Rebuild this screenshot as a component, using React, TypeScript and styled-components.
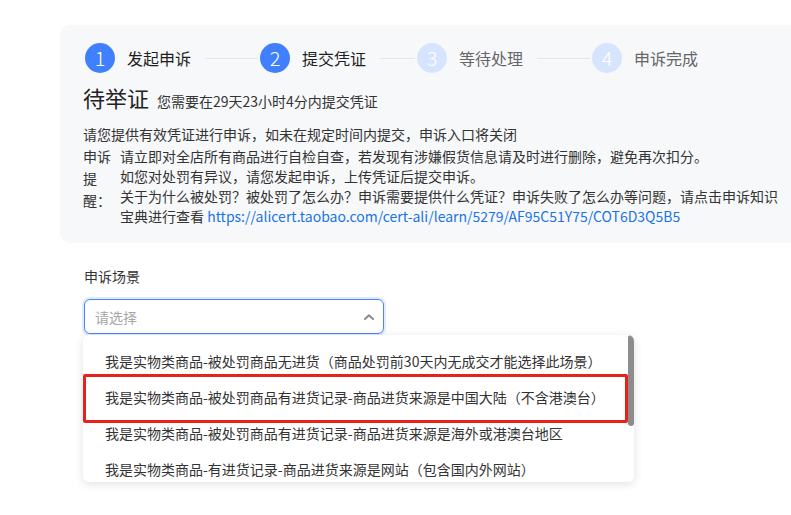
import React from 'react'
import styled, { createGlobalStyle } from 'styled-components'

const GlobalStyle = createGlobalStyle`
  html, body {
    margin: 0;
    padding: 0;
    background: #fff;
    overflow: hidden;
  }
  body {
    font-family: "Noto Sans CJK SC", "Noto Sans", sans-serif;
    color: #333;
  }
`

const Page = styled.div`
  width: 791px;
  height: 515px;
  overflow: hidden;
  padding: 25px 0 0 60px;
  box-sizing: border-box;
`

const Panel = styled.section`
  width: 760px;
  background: #f7f8fa;
  border-radius: 10px;
  padding: 18px 0 17px 23px;
  box-sizing: border-box;
`

const Steps = styled.div`
  display: flex;
  align-items: center;
  padding-left: 2px;
  height: 30px;
`

const Circle = styled.div<{ $active?: boolean }>`
  width: 30px;
  height: 30px;
  border-radius: 50%;
  background: ${p => (p.$active ? '#4080ff' : '#d7e4fe')};
  color: #fff;
  font-size: 20px;
  font-weight: 300;
  line-height: 30px;
  text-align: center;
  flex-shrink: 0;
`

const StepLabel = styled.span<{ $active?: boolean }>`
  margin-left: 12px;
  font-size: 16px;
  line-height: 30px;
  color: ${p => (p.$active ? '#1f1f1f' : '#666')};
  white-space: nowrap;
`

const Connector = styled.div<{ $w: number }>`
  width: ${p => p.$w}px;
  height: 1px;
  background: #e3e5e9;
  margin: 0 2px 0 14px;
  flex-shrink: 0;
`

const HeadRow = styled.div`
  display: flex;
  align-items: baseline;
  margin-top: 9px;
`

const Title = styled.h1`
  margin: 0;
  font-size: 22px;
  font-weight: 400;
  line-height: 30px;
  color: #222;
`

const Sub = styled.span`
  margin-left: 8px;
  font-size: 14px;
  color: #333;
`

const Notice = styled.p`
  margin: 12px 0 0;
  font-size: 14px;
  line-height: 20px;
  color: #333;
`

const Reminder = styled.div`
  display: flex;
  align-items: flex-start;
  margin-top: 1px;
  font-size: 14px;
  color: #333;
`

const ReminderLabel = styled.div`
  width: 30px;
  flex-shrink: 0;
  line-height: 22px;
`

const ReminderList = styled.div`
  width: 660px;
  margin-left: 7px;
  padding-top: 1px;
  line-height: 20px;
`

const Link = styled.a`
  color: #1a73e8;
  text-decoration: none;
`

const Form = styled.div`
  margin-top: 23px;
  padding-left: 24px;
`

const FieldLabel = styled.div`
  font-size: 14px;
  line-height: 20px;
  color: #333;
`

const SelectWrap = styled.div`
  position: relative;
  width: 300px;
  margin-top: 13px;
`

const SelectBox = styled.div`
  height: 35px;
  box-sizing: border-box;
  border: 1px solid #4a86f7;
  border-radius: 6px;
  box-shadow: 0 0 0 2px rgba(64, 128, 255, 0.16);
  background: #fff;
  display: flex;
  align-items: center;
  justify-content: space-between;
  padding: 0 9px 0 10px;
`

const Placeholder = styled.span`
  font-size: 14px;
  color: #a6a6a6;
`

const Dropdown = styled.div`
  position: absolute;
  top: 36px;
  left: -1px;
  width: 551px;
  height: 147px;
  box-sizing: border-box;
  padding: 8px 6px 0 0;
  background: #fff;
  border-radius: 6px;
  box-shadow: 0 2px 10px rgba(0, 0, 0, 0.12);
  overflow: hidden;
`

const ScrollThumb = styled.div`
  position: absolute;
  top: 0;
  right: 0;
  width: 6px;
  height: 91px;
  border-radius: 3px;
  background: #8c8c8c;
`

const Option = styled.div<{ $marked?: boolean }>`
  position: relative;
  height: 36px;
  line-height: 36px;
  padding-left: 22px;
  font-size: 14px;
  color: #333;
  white-space: nowrap;
  ${p =>
    p.$marked &&
    `
    &::after {
      content: '';
      position: absolute;
      top: -5px;
      bottom: -8px;
      left: 0;
      right: 0;
      border: 3px solid #e8221b;
      border-radius: 2px;
    }
  `}
`

const steps = [
  { n: 1, label: '发起申诉', active: true, line: 53 },
  { n: 2, label: '提交凭证', active: true, line: 35 },
  { n: 3, label: '等待处理', active: false, line: 53 },
  { n: 4, label: '申诉完成', active: false, line: 0 },
]

const options = [
  '我是实物类商品-被处罚商品无进货（商品处罚前30天内无成交才能选择此场景）',
  '我是实物类商品-被处罚商品有进货记录-商品进货来源是中国大陆（不含港澳台）',
  '我是实物类商品-被处罚商品有进货记录-商品进货来源是海外或港澳台地区',
  '我是实物类商品-有进货记录-商品进货来源是网站（包含国内外网站）',
]

const ChevronUp = () => (
  <svg width="10" height="6" viewBox="0 0 10 6" fill="none">
    <path d="M1 5 L5 1.2 L9 5" stroke="#8c8c8c" strokeWidth="2" strokeLinecap="round" strokeLinejoin="round" />
  </svg>
)

const App = () => {
  return (
    <>
      <GlobalStyle />
      <Page>
        <Panel>
          <Steps>
            {steps.map(s => (
              <React.Fragment key={s.n}>
                <Circle $active={s.active}>{s.n}</Circle>
                <StepLabel $active={s.active}>{s.label}</StepLabel>
                {s.line > 0 && <Connector $w={s.line} />}
              </React.Fragment>
            ))}
          </Steps>
          <HeadRow>
            <Title>待举证</Title>
            <Sub>您需要在29天23小时4分内提交凭证</Sub>
          </HeadRow>
          <Notice>请您提供有效凭证进行申诉，如未在规定时间内提交，申诉入口将关闭</Notice>
          <Reminder>
            <ReminderLabel>申诉提醒：</ReminderLabel>
            <ReminderList>
              <div>请立即对全店所有商品进行自检自查，若发现有涉嫌假货信息请及时进行删除，避免再次扣分。</div>
              <div>如您对处罚有异议，请您发起申诉，上传凭证后提交申诉。</div>
              <div>
                关于为什么被处罚？被处罚了怎么办？申诉需要提供什么凭证？申诉失败了怎么办等问题，请点击申诉知识宝典进行查看{' '}
                <Link href="#">https://alicert.taobao.com/cert-ali/learn/5279/AF95C51Y75/COT6D3Q5B5</Link>
              </div>
            </ReminderList>
          </Reminder>
        </Panel>
        <Form>
          <FieldLabel>申诉场景</FieldLabel>
          <SelectWrap>
            <SelectBox>
              <Placeholder>请选择</Placeholder>
              <ChevronUp />
            </SelectBox>
            <Dropdown>
              {options.map((o, i) => (
                <Option key={o} $marked={i === 1}>
                  {o}
                </Option>
              ))}
              <ScrollThumb />
            </Dropdown>
          </SelectWrap>
        </Form>
      </Page>
    </>
  )
}

export default App
